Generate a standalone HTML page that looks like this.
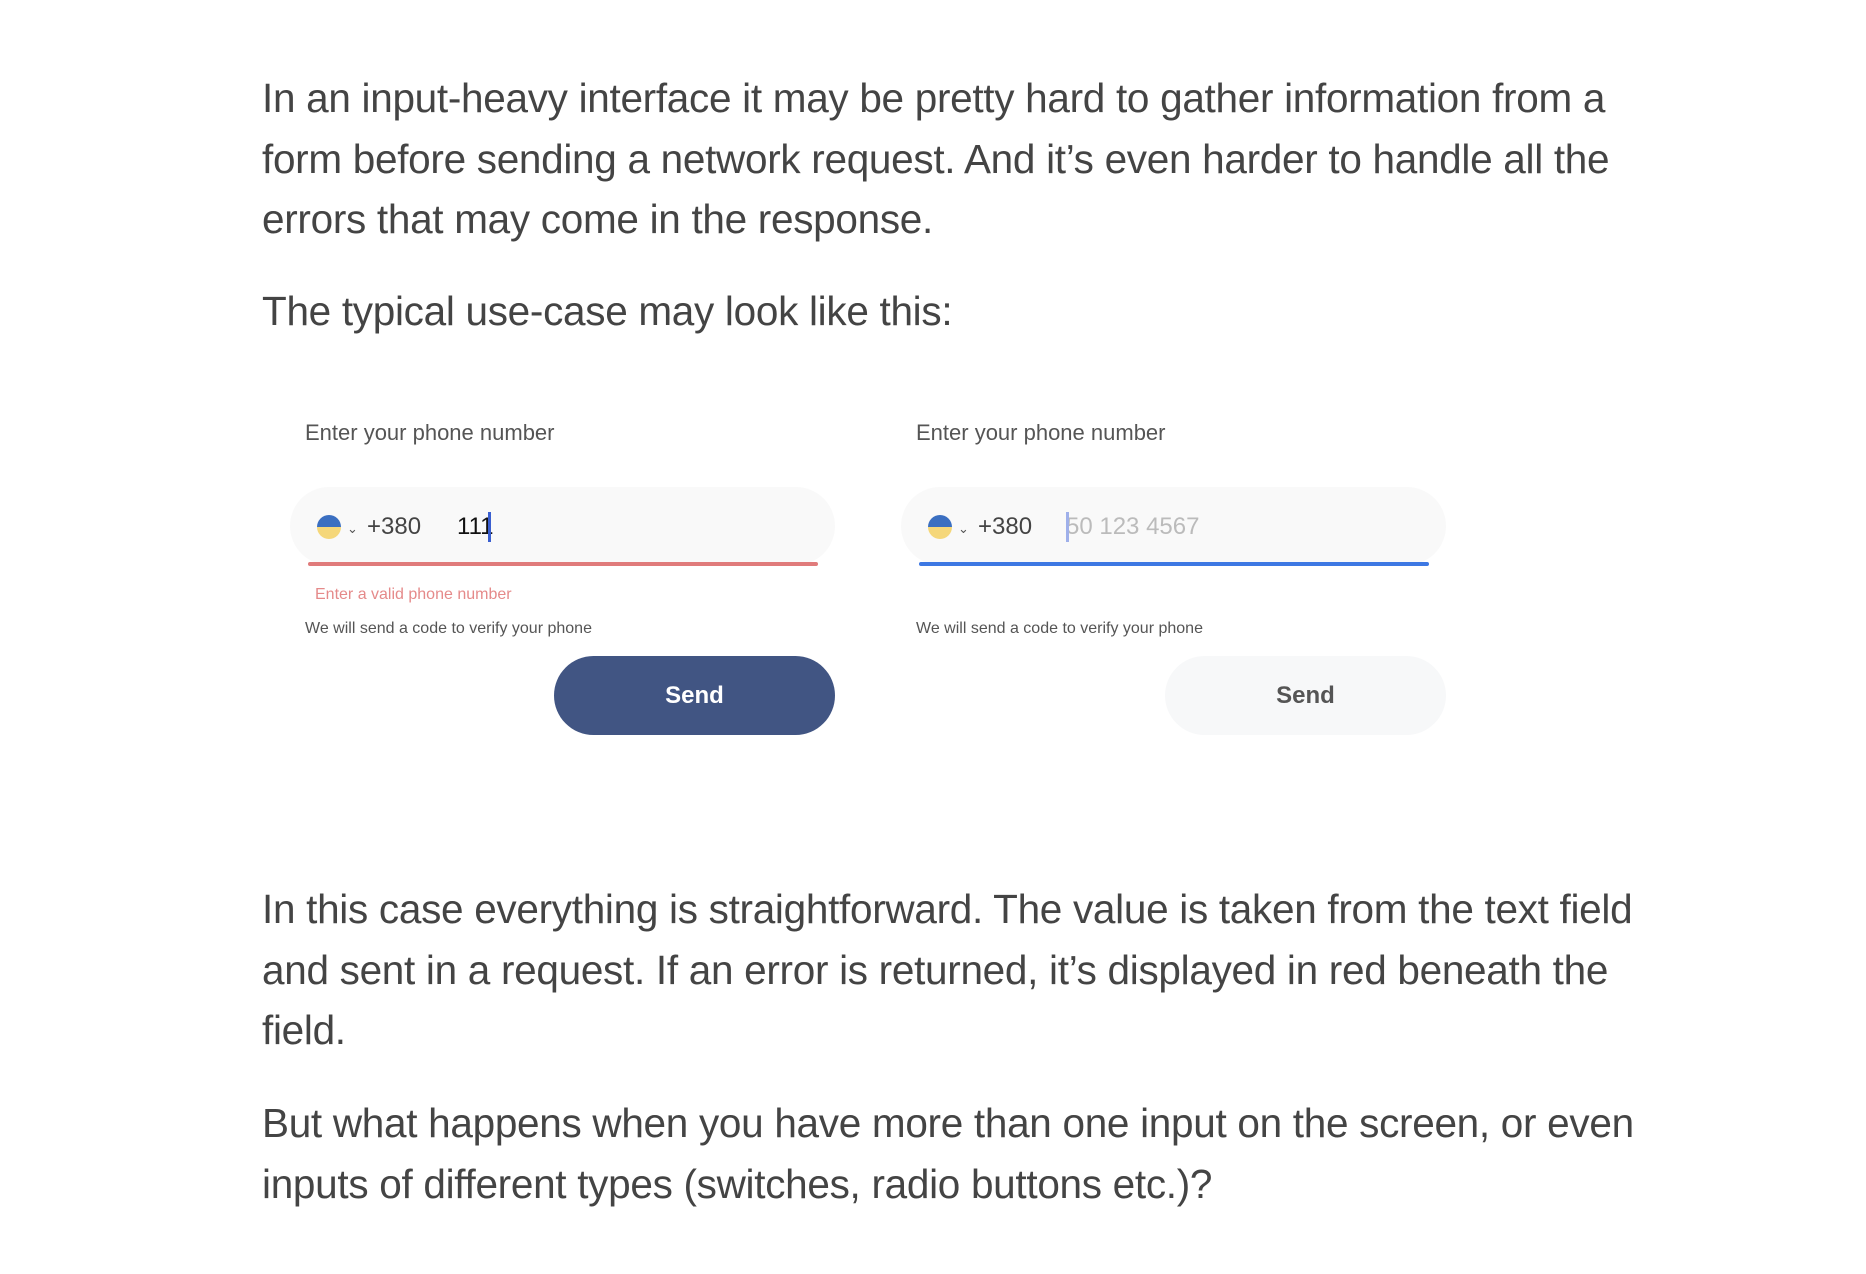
<!DOCTYPE html>
<html><head><meta charset="utf-8"><style>
body{margin:0;width:1866px;height:1274px;background:#fff;position:relative;overflow:hidden;font-family:"Liberation Sans",sans-serif}
.p{position:absolute;left:262px;color:#444;font-size:40.5px;line-height:60.5px;margin:0;white-space:nowrap;letter-spacing:-0.3px}
.a{position:absolute;white-space:nowrap}
.lbl{font-size:22px;color:#555}
.field{position:absolute;width:545px;height:78px;border-radius:39px;background:#f9f9f9}
.ul{position:absolute;height:4px;border-radius:2px}
.flag{position:absolute;width:24px;height:24px;border-radius:50%;background:linear-gradient(#3b6fc1 50%,#f5d77a 50%)}
.code{font-size:24px;color:#444}
.hint{font-size:16px;color:#555}
.btn{position:absolute;width:281px;height:79px;border-radius:40px;font-weight:bold;font-size:24px;text-align:center;line-height:79px}
.chev{font-size:13px;color:#555}
</style></head><body>
<p class="p" style="top:68px">In an input-heavy interface it may be pretty hard to gather information from a<br>form before sending a network request. And it’s even harder to handle all the<br>errors that may come in the response.</p>
<p class="p" style="top:281px">The typical use-case may look like this:</p>

<div class="a lbl" style="left:305px;top:420px">Enter your phone number</div>
<div class="field" style="left:290px;top:487px"></div>
<div class="ul" style="left:308px;top:562px;width:510px;background:#e07b7b"></div>
<div class="flag" style="left:317px;top:515px"></div>
<div class="a chev" style="left:347px;top:521px">⌄</div>
<div class="a code" style="left:367px;top:513px">+380</div>
<div class="a code" style="left:457px;top:513px;color:#111">111</div>
<div class="a" style="left:488px;top:512px;width:3px;height:30px;background:#3a5fd0"></div>
<div class="a" style="left:315px;top:586px;font-size:16px;color:#e58a8a">Enter a valid phone number</div>
<div class="a hint" style="left:305px;top:620px">We will send a code to verify your phone</div>
<div class="btn" style="left:554px;top:656px;background:#415583;color:#fff">Send</div>

<div class="a lbl" style="left:916px;top:420px">Enter your phone number</div>
<div class="field" style="left:901px;top:487px"></div>
<div class="ul" style="left:919px;top:562px;width:510px;background:#3d78e3"></div>
<div class="flag" style="left:928px;top:515px"></div>
<div class="a chev" style="left:958px;top:521px">⌄</div>
<div class="a code" style="left:978px;top:513px">+380</div>
<div class="a code" style="left:1066px;top:513px;color:#bbb">50 123 4567</div>
<div class="a" style="left:1066px;top:512px;width:3px;height:30px;background:#9fb0ea"></div>
<div class="a hint" style="left:916px;top:620px">We will send a code to verify your phone</div>
<div class="btn" style="left:1165px;top:656px;background:#f7f8f9;color:#555">Send</div>

<p class="p" style="top:879px">In this case everything is straightforward. The value is taken from the text field<br>and sent in a request. If an error is returned, it’s displayed in red beneath the<br>field.</p>
<p class="p" style="top:1093px">But what happens when you have more than one input on the screen, or even<br>inputs of different types (switches, radio buttons etc.)?</p>
</body></html>
